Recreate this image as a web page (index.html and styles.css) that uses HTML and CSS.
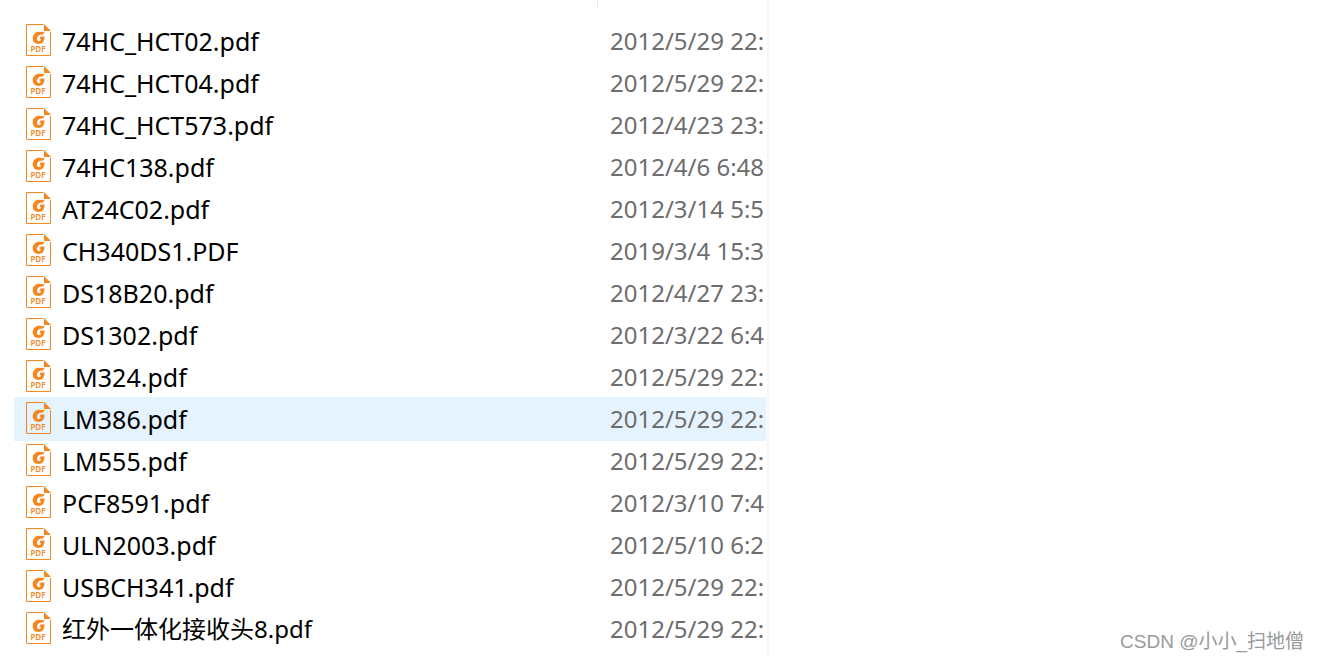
FILE: index.html
```html
<!DOCTYPE html>
<html lang="zh-CN">
<head>
    <meta charset="utf-8">
    <title>Datasheets</title>
    <link rel="stylesheet" href="styles.css">
</head>
<body>
    <main class="window">
        <section class="pane">
            <div class="pane-header"></div>
            <table class="files">
                <colgroup>
                    <col class="col-name">
                    <col class="col-date">
                </colgroup>
                <tbody id="rows"></tbody>
            </table>
        </section>
        <aside class="preview">
            <p class="credit">CSDN @小小_扫地僧</p>
        </aside>
    </main>
    <template id="row">
        <tr>
            <td class="name">
                <svg class="icon" viewBox="0 0 25 32" aria-hidden="true">
                    <path d="M17.500 .5H.5v31h24V8" fill="none" stroke="#f6871f"/>
                    <path d="M18 0v7h7z" fill="#f6871f"/>
                    <path d="M18.500 7.500c-.2 2-1.500 3.300-3.500 3.300-2.500 0-4 1.800-4 4 0 1.500.8 2.300 1.900 2.300s1.900-.8 2.200-2.100h-1.600l1-2.500H18.500c.3 4.500-2 7.500-6 7.500-3.500 0-5.800-2.200-5.800-5.700 0-4 3-6.600 6.600-6.600 2 0 3.700.8 5.200-.2z" fill="#f6871f"/>
                    <text x="12" y="28" text-anchor="middle">PDF</text>
                </svg>
                <span class="filename"></span>
            </td>
            <td class="date"></td>
        </tr>
    </template>
    <script>
        const files = [
            ["74HC_HCT02.pdf", "2012/5/29 22:"],
            ["74HC_HCT04.pdf", "2012/5/29 22:"],
            ["74HC_HCT573.pdf", "2012/4/23 23:"],
            ["74HC138.pdf", "2012/4/6 6:48"],
            ["AT24C02.pdf", "2012/3/14 5:5"],
            ["CH340DS1.PDF", "2019/3/4 15:3"],
            ["DS18B20.pdf", "2012/4/27 23:"],
            ["DS1302.pdf", "2012/3/22 6:4"],
            ["LM324.pdf", "2012/5/29 22:"],
            ["LM386.pdf", "2012/5/29 22:"],
            ["LM555.pdf", "2012/5/29 22:"],
            ["PCF8591.pdf", "2012/3/10 7:4"],
            ["ULN2003.pdf", "2012/5/10 6:2"],
            ["USBCH341.pdf", "2012/5/29 22:"],
            ["红外一体化接收头8.pdf", "2012/5/29 22:"]
        ]
        const selected = "LM386.pdf"
        const rows = document.getElementById("rows")
        const template = document.getElementById("row")

        for (const [name, date] of files) {
            const row = template.content.cloneNode(true)
            const filename = row.querySelector(".filename")
            filename.innerText = name
            if (/[\u4e00-\u9fff]/.test(name)) {
                filename.classList.add("cjk")
            }
            row.querySelector(".date").innerText = date
            if (name === selected) {
                row.querySelector("tr").className = "selected"
            }
            rows.appendChild(row)
        }
    </script>
</body>
</html>
```
FILE: styles.css
```css
body {
    margin: 0;
    background: #ffffff;
    color: #000000;
    font-family: "Noto Sans", "Noto Sans CJK SC", sans-serif;
    font-size: 24px;
}
.window {
    display: grid;
    grid-template-columns: 7fr 5fr;
}
.pane {
    min-width: 0;
    overflow: hidden;
    padding: 0 1px 9px 14px;
    border-right: 2px solid #f7f7f7;
}
.pane-header {
    width: 583px;
    height: 7px;
    margin-bottom: 13px;
    border-right: 1px solid #e5e5e5;
}
.files {
    width: 100%;
    table-layout: fixed;
    border-collapse: collapse;
}
.col-name {
    width: 596px;
}
.files td {
    height: 42px;
    padding: 0;
    line-height: 42px;
    white-space: nowrap;
    overflow: hidden;
    vertical-align: top;
}
.files .name {
    padding-left: 12px;
}
.files .date {
    color: #6d6d6d;
}
.filename {
    display: block;
    font-size: 25px;
}
.filename.cjk {
    font-size: 24px;
}
.selected {
    background: #e5f3ff;
    box-shadow: 0 1px #e5f3ff, 0 -1px #e5f3ff;
}
.icon {
    width: 25px;
    height: 32px;
    margin: 4px 11px 6px 0;
    float: left;
}
.icon text {
    fill: #f6871f;
    font-family: "Noto Sans", sans-serif;
    font-size: 8px;
    font-weight: 600;
}
.preview {
    display: flex;
    align-items: flex-end;
    justify-content: flex-end;
    padding: 0 14px 3px 0;
}
.credit {
    margin: 0;
    color: #999999;
    font-family: "Liberation Sans", "Noto Sans CJK SC", sans-serif;
    font-size: 19px;
    line-height: 28px;
}
```
